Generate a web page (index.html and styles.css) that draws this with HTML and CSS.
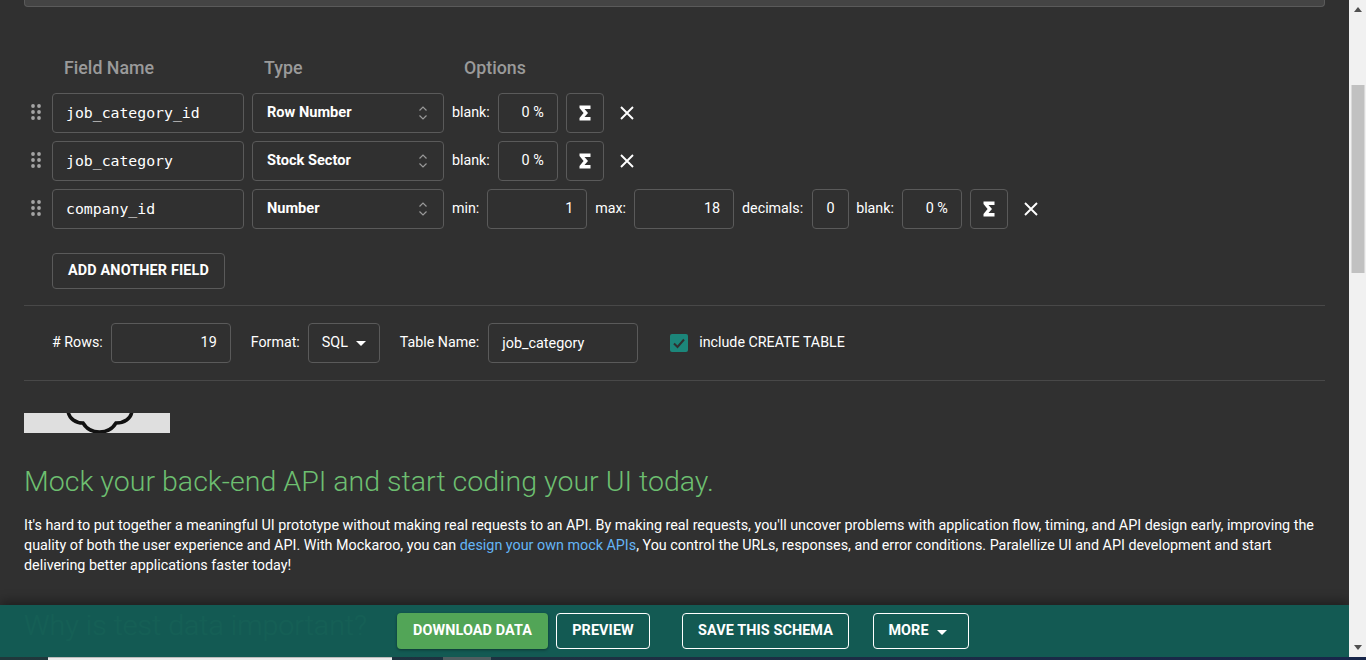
FILE: index.html
```html
<!DOCTYPE html>
<html lang="en">
<head>
<meta charset="utf-8">
<title>Mockaroo</title>
<link rel="stylesheet" href="styles.css">
</head>
<body>
<div class="viewport">
  <main class="content">
    <div class="top-box"></div>
    <div class="headers">
      <span class="h-name">Field Name</span>
      <span class="h-type">Type</span>
      <span class="h-options">Options</span>
    </div>
    <div class="row">
      <svg class="grip" viewBox="0 0 10 16"><g fill="#a4a4a4"><circle cx="2" cy="2" r="1.9"/><circle cx="8" cy="2" r="1.9"/><circle cx="2" cy="8" r="1.9"/><circle cx="8" cy="8" r="1.9"/><circle cx="2" cy="14" r="1.9"/><circle cx="8" cy="14" r="1.9"/></g></svg>
      <div class="box name">job_category_id</div>
      <div class="box type"><span>Row Number</span><svg class="updown" viewBox="0 0 10 16"><path d="M1.5 5.5 5 2l3.500 3.500M1.500 10.500 5 14l3.500-3.500" fill="none" stroke="#999" stroke-width="1.200"/></svg></div>
      <span class="lbl">blank:</span>
      <div class="box num pct">0 %</div>
      <button class="box sigma"><svg viewBox="0 0 12 16"><path d="M0.500 0.500H11.500V4H5.500L9 8 5.500 12H11.500V15.500H0.500V13L4.600 8 .5 3Z" fill="#fff"/></svg></button>
      <svg class="close" viewBox="0 0 14 14"><path d="M1 1 13 13M13 1 1 13" stroke="#fff" stroke-width="1.900" fill="none"/></svg>
    </div>
    <div class="row">
      <svg class="grip" viewBox="0 0 10 16"><g fill="#a4a4a4"><circle cx="2" cy="2" r="1.9"/><circle cx="8" cy="2" r="1.9"/><circle cx="2" cy="8" r="1.9"/><circle cx="8" cy="8" r="1.9"/><circle cx="2" cy="14" r="1.9"/><circle cx="8" cy="14" r="1.9"/></g></svg>
      <div class="box name">job_category</div>
      <div class="box type"><span>Stock Sector</span><svg class="updown" viewBox="0 0 10 16"><path d="M1.5 5.5 5 2l3.500 3.500M1.500 10.500 5 14l3.500-3.500" fill="none" stroke="#999" stroke-width="1.200"/></svg></div>
      <span class="lbl">blank:</span>
      <div class="box num pct">0 %</div>
      <button class="box sigma"><svg viewBox="0 0 12 16"><path d="M0.500 0.500H11.500V4H5.500L9 8 5.500 12H11.500V15.500H0.500V13L4.600 8 .5 3Z" fill="#fff"/></svg></button>
      <svg class="close" viewBox="0 0 14 14"><path d="M1 1 13 13M13 1 1 13" stroke="#fff" stroke-width="1.900" fill="none"/></svg>
    </div>
    <div class="row">
      <svg class="grip" viewBox="0 0 10 16"><g fill="#a4a4a4"><circle cx="2" cy="2" r="1.9"/><circle cx="8" cy="2" r="1.9"/><circle cx="2" cy="8" r="1.9"/><circle cx="8" cy="8" r="1.9"/><circle cx="2" cy="14" r="1.9"/><circle cx="8" cy="14" r="1.9"/></g></svg>
      <div class="box name">company_id</div>
      <div class="box type"><span>Number</span><svg class="updown" viewBox="0 0 10 16"><path d="M1.5 5.5 5 2l3.500 3.500M1.500 10.500 5 14l3.500-3.500" fill="none" stroke="#999" stroke-width="1.200"/></svg></div>
      <span class="lbl">min:</span>
      <div class="box num range">1</div>
      <span class="lbl">max:</span>
      <div class="box num range">18</div>
      <span class="lbl">decimals:</span>
      <div class="box num dec">0</div>
      <span class="lbl">blank:</span>
      <div class="box num pct">0 %</div>
      <button class="box sigma"><svg viewBox="0 0 12 16"><path d="M0.500 0.500H11.500V4H5.500L9 8 5.500 12H11.500V15.500H0.500V13L4.600 8 .5 3Z" fill="#fff"/></svg></button>
      <svg class="close" viewBox="0 0 14 14"><path d="M1 1 13 13M13 1 1 13" stroke="#fff" stroke-width="1.900" fill="none"/></svg>
    </div>
    <button class="add-btn">ADD ANOTHER FIELD</button>
    <div class="settings">
      <span class="lbl">#&nbsp;Rows:</span>
      <div class="box num rows">19</div>
      <span class="lbl f-format">Format:</span>
      <div class="box format">SQL<i class="caret"></i></div>
      <span class="lbl f-table">Table Name:</span>
      <div class="box table-name">job_category</div>
      <span class="check"><svg viewBox="0 0 18 18"><path d="M4 9.500 7.500 13 14 5.500" fill="none" stroke="#303030" stroke-width="2"/></svg></span>
      <span class="lbl check-label">include CREATE TABLE</span>
    </div>
    <div class="banner"><svg viewBox="0 0 146 20"><path d="M44 -2C45 6 52 10 59 10C62 15 68 19 75.500 19C83 19 89 15 92 10C100 10 107 6 108 -2" fill="none" stroke="#111" stroke-width="3.500"/></svg></div>
    <h1 class="promo-title">Mock your back-end API and start coding your UI today.</h1>
    <p class="promo-text">It's hard to put together a meaningful UI prototype without making real requests to an API. By making real requests, you'll uncover problems with application flow, timing, and API design early, improving the quality of both the user experience and API. With Mockaroo, you can <a href="#">design your own mock APIs</a>, You control the URLs, responses, and error conditions. Paralellize UI and API development and start delivering better applications faster today!</p>
    <h2 class="promo-title second">Why is test data important?</h2>
    <div class="action-bar">
      <button class="bar-btn primary">DOWNLOAD DATA</button>
      <button class="bar-btn preview">PREVIEW</button>
      <button class="bar-btn save">SAVE THIS SCHEMA</button>
      <button class="bar-btn more">MORE<i class="caret"></i></button>
    </div>
  </main>
  <div class="scrollbar">
    <svg class="arrow" viewBox="0 0 8 5"><path d="M4 0 8 5H0Z" fill="#505050"/></svg>
    <div class="track"><div class="thumb"></div></div>
    <svg class="arrow" viewBox="0 0 8 5"><path d="M0 0H8L4 5Z" fill="#505050"/></svg>
  </div>
</div>
<div class="strip"><span class="strip-white"></span><span class="strip-gray"></span></div>
</body>
</html>
```
FILE: styles.css
```css
* { box-sizing: border-box; }
html, body { margin: 0; height: 660px; overflow: hidden; }
body { font-family: Roboto, "Liberation Sans", sans-serif; font-size: 14.4px; color: #fff; background: #303030; display: flex; flex-direction: column; }
.viewport { display: flex; height: 657px; flex: none; }
.content { position: relative; flex: 1; min-width: 0; padding: 0 24px; overflow: hidden; background: #303030; }
.top-box { height: 7px; margin-top: 0; background: #444; border: 1px solid #5a5a5a; border-top: 0; border-radius: 0 0 4px 4px; }
.headers { display: flex; font-size: 17.8px; font-weight: 500; color: #9a9a9a; height: 21px; margin-top: 50px; line-height: 21px; padding-left: 40px; }
.h-name { width: 200px; }
.h-type { width: 200px; }
.row { display: flex; align-items: center; height: 40px; margin-top: 8px; }
.headers + .row { margin-top: 15px; }
.grip { width: 10px; height: 16px; margin: -2px 0 0 7px; flex: none; }
.box { border: 1px solid #5a5a5a; border-radius: 4px; height: 40px; background: #303030; color: #fff; display: flex; align-items: center; flex: none; font: inherit; }
.name { width: 192px; margin-left: 11px; padding: 0 0 2px 13px; font-family: "DejaVu Sans Mono", monospace; font-size: 14.8px; }
.type { width: 192px; margin-left: 8px; padding: 0 16px 2px 14px; font-weight: 700; font-size: 14.6px; justify-content: space-between; }
.updown { width: 10px; height: 16px; margin-top: 2px; margin-right: -1px; }
.lbl { margin-left: 8px; margin-top: -2px; flex: none; font-size: 14.25px; }
.num { justify-content: flex-end; padding: 0 13px 2px 0; }
.pct { width: 60px; margin-left: 8px; }
.range { width: 100px; margin-left: 8px; }
.dec { width: 37px; margin: 0 -1px 0 9px; justify-content: center; padding: 0 0 2px; }
.sigma { width: 38px; margin-left: 8px; justify-content: center; padding: 0; }
.sigma svg { width: 12px; height: 16px; }
.close { width: 14px; height: 14px; margin-left: 16px; flex: none; }
.add-btn { display: block; margin: 24px 0 0 28px; width: 173px; height: 36px; border: 1px solid #5a5a5a; border-radius: 4px; background: #303030; color: #fff; font: 700 14.4px Roboto, sans-serif; letter-spacing: .15px; padding: 0 0 2px; }
.settings { display: flex; align-items: center; height: 76px; margin-top: 16px; border-top: 1px solid #484848; border-bottom: 1px solid #484848; padding-left: 20px; }
.settings .lbl:first-child { margin-left: 8px; }
.rows { width: 120px; margin-left: 8px; padding-right: 13px; }
.f-format { margin-left: 20px; }
.format { width: 72px; margin-left: 8px; padding: 0 0 2px 13px; }
.caret { display: inline-block; width: 0; height: 0; border-left: 5px solid transparent; border-right: 5px solid transparent; border-top: 5px solid #fff; margin-left: 8px; margin-top: 2px; }
.f-table { margin-left: 20px; }
.table-name { width: 150px; margin-left: 9px; padding-left: 13px; }
.check { width: 18px; height: 18px; margin-left: 32px; background: #1c867a; border-radius: 2px; flex: none; display: flex; }
.check svg { width: 18px; height: 18px; }
.check-label { margin-left: 11px; }
.banner { width: 146px; height: 20px; margin-top: 32px; background: #dfdfdf; }
.banner svg { display: block; width: 146px; height: 20px; }
.promo-title { margin: 31px 0 0; font-size: 28.55px; font-weight: 300; line-height: 36px; color: #6dbf70; }
.promo-text { margin: 15px 0 0; line-height: 20px; font-size: 14.33px; }
.promo-text a { color: #64b5f6; text-decoration: none; }
.second { margin-top: 33px; }
.action-bar { position: absolute; left: 0; right: 0; bottom: 0; height: 52px; background: rgba(19, 92, 85, .97); box-shadow: 0 -4px 10px rgba(0,0,0,.35); display: flex; align-items: center; padding: 0 0 0 397px; }
.bar-btn { height: 36px; border: 1px solid #fff; border-radius: 4px; background: transparent; color: #fff; font: 700 14.4px Roboto, sans-serif; letter-spacing: .1px; padding: 0 0 2px; flex: none; }
.primary { width: 151px; background: #52a557; border: 0; box-shadow: 0 1px 3px rgba(0,0,0,.4); }
.preview { width: 94px; margin-left: 8px; }
.save { width: 167px; margin-left: 32px; }
.more { width: 96px; margin-left: 24px; padding-right: 7px; }
.scrollbar { width: 17px; flex: none; background: #f1f1f1; display: flex; flex-direction: column; align-items: center; padding: 7px 0; }
.arrow { width: 8px; height: 5px; flex: none; }
.track { flex: 1; width: 100%; padding-top: 73px; }
.thumb { width: 13px; height: 188px; margin: 0 auto; background: #c1c1c1; transform: translateX(.5px); }
.strip { height: 3px; flex: none; background: linear-gradient(90deg, #20383b, #18264a); display: flex; }
.strip-white { width: 344px; margin-left: 48px; background: #ececec; border-top: 1px solid #bbb; }
.strip-gray { width: 48px; margin-left: 51px; background: #4f5d60; }
```
